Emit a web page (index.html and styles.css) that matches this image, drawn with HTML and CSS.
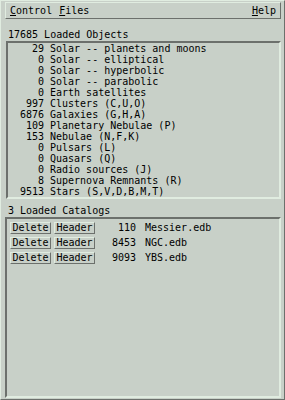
FILE: index.html
```html
<!DOCTYPE html>
<html lang="en">
<head>
  <meta charset="UTF-8">
  <title>DB</title>
  <link rel="stylesheet" href="styles.css">
</head>
<body class="db-body">

<div class="db-window">
  <div class="db-menubar">
    <span class="db-menu"><u>C</u>ontrol</span>
    <span class="db-menu"><u>F</u>iles</span>
    <span class="db-menu db-menu-right"><u>H</u>elp</span>
  </div>

  <div class="db-title">17685 Loaded Objects</div>

  <div class="db-objects">
    <div class="db-obj"><span class="db-num">29</span><span>Solar -- planets and moons</span></div>
    <div class="db-obj"><span class="db-num">0</span><span>Solar -- elliptical</span></div>
    <div class="db-obj"><span class="db-num">0</span><span>Solar -- hyperbolic</span></div>
    <div class="db-obj"><span class="db-num">0</span><span>Solar -- parabolic</span></div>
    <div class="db-obj"><span class="db-num">0</span><span>Earth satellites</span></div>
    <div class="db-obj"><span class="db-num">997</span><span>Clusters (C,U,O)</span></div>
    <div class="db-obj"><span class="db-num">6876</span><span>Galaxies (G,H,A)</span></div>
    <div class="db-obj"><span class="db-num">109</span><span>Planetary Nebulae (P)</span></div>
    <div class="db-obj"><span class="db-num">153</span><span>Nebulae (N,F,K)</span></div>
    <div class="db-obj"><span class="db-num">0</span><span>Pulsars (L)</span></div>
    <div class="db-obj"><span class="db-num">0</span><span>Quasars (Q)</span></div>
    <div class="db-obj"><span class="db-num">0</span><span>Radio sources (J)</span></div>
    <div class="db-obj"><span class="db-num">8</span><span>Supernova Remnants (R)</span></div>
    <div class="db-obj"><span class="db-num">9513</span><span>Stars (S,V,D,B,M,T)</span></div>
  </div>

  <div class="db-title db-title-cat">3 Loaded Catalogs</div>

  <div class="db-catalogs">
    <div class="db-cat">
      <button class="db-btn">Delete</button>
      <button class="db-btn">Header</button>
      <span class="db-cat-num">110</span>
      <span class="db-cat-name">Messier.edb</span>
    </div>
    <div class="db-cat">
      <button class="db-btn">Delete</button>
      <button class="db-btn">Header</button>
      <span class="db-cat-num">8453</span>
      <span class="db-cat-name">NGC.edb</span>
    </div>
    <div class="db-cat">
      <button class="db-btn">Delete</button>
      <button class="db-btn">Header</button>
      <span class="db-cat-num">9093</span>
      <span class="db-cat-name">YBS.edb</span>
    </div>
  </div>
</div>

</body>
</html>
```

FILE: styles.css
```css
/* base */
.db-body {
  margin: 0;
  padding: 0;
  background: #c8d0c8;
  font-family: "DejaVu Sans Mono", "Liberation Mono", monospace;
  font-size: 10px;
  color: #000;
}

.db-window {
  box-sizing: border-box;
  width: 285px;
  height: 400px;
  display: flex;
  flex-direction: column;
  padding: 1px 3px 0 4px;
  border-top: 1px solid #e0ece0;
  border-left: 1px solid #e0ece0;
  border-right: 1px solid #6c706c;
  border-bottom: 1px solid #6c706c;
}

/* menubar */
.db-menubar {
  display: flex;
  height: 15px;
  align-items: center;
  border-top: 1px solid #e0ece0;
  border-left: 1px solid #e0ece0;
  border-right: 1px solid #6c706c;
  border-bottom: 1px solid #6c706c;
  padding: 0 4px;
}

.db-menu {
  margin-right: 7px;
}

.db-menu-right {
  margin-left: auto;
  margin-right: 0;
}

/* titles */
.db-title {
  margin: 9px 0 0 3px;
  height: 13px;
  line-height: 13px;
}

.db-title-cat {
  margin-top: 5px;
}

/* objects list */
.db-objects {
  margin: 0 0 0 1px;
  padding: 0;
  border-top: 2px solid #6c706c;
  border-left: 2px solid #6c706c;
  border-right: 2px solid #e0ece0;
  border-bottom: 2px solid #e0ece0;
}

.db-obj {
  display: grid;
  grid-template-columns: 36px auto;
  grid-column-gap: 6px;
  height: 11px;
  line-height: 11px;
  white-space: pre;
}

.db-num {
  text-align: right;
}

/* catalogs */
.db-catalogs {
  flex: 1;
  margin-bottom: 1px;
  padding: 1px 0 0 3px;
  border-top: 2px solid #6c706c;
  border-left: 2px solid #6c706c;
  border-right: 2px solid #e0ece0;
  border-bottom: 2px solid #e0ece0;
}

.db-cat {
  display: flex;
  align-items: center;
  height: 15px;
}

.db-btn {
  box-sizing: border-box;
  height: 12px;
  width: 41px;
  margin: 0 3px 0 0;
  padding: 0;
  font-family: inherit;
  font-size: 10px;
  line-height: 10px;
  color: #000;
  background: #c8d0c8;
  border-top: 1px solid #e0ece0;
  border-left: 1px solid #e0ece0;
  border-right: 1px solid #6c706c;
  border-bottom: 1px solid #6c706c;
}

.db-cat-num {
  width: 38px;
  text-align: right;
}

.db-cat-name {
  margin-left: 9px;
}
```
